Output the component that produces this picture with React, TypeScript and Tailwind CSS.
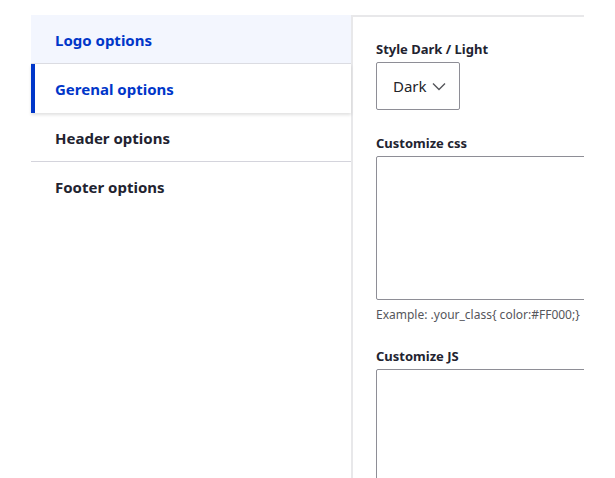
import React from "react";

export default function App() {
  const font = { fontFamily: '"Segoe UI", "Noto Sans", "Open Sans", sans-serif' };
  return (
    <div className="w-[615px] h-[478px] bg-white overflow-hidden" style={font}>
      <div className="flex pl-[31px] pt-[15px] h-full">
        <div className="w-[320px] shrink-0 flex flex-col">
          <div className="h-[49px] bg-[#f3f6fe] border-b border-[#dcdde3] flex items-center pl-[24px] pt-[2px] text-[15px] font-bold text-[#0036c9]">
            Logo options
          </div>
          <div className="relative h-[49px] bg-white flex items-center pl-[24px] pt-[2px] text-[15px] font-bold text-[#0036c9] border-l-4 border-[#0036c9] shadow-[0_2px_3px_rgba(0,0,0,0.12)] z-10">
            <span className="-ml-[4px]">Gerenal options</span>
          </div>
          <div className="h-[49px] bg-white border-b border-[#d4d4dc] flex items-center pl-[24px] pt-[2px] text-[15px] font-bold text-[#222330]">
            Header options
          </div>
          <div className="h-[49px] bg-white flex items-center pl-[24px] pt-[2px] text-[15px] font-bold text-[#222330]">
            Footer options
          </div>
        </div>
        <div className="w-[233px] shrink-0 overflow-hidden border-t-2 border-l-2 border-[#e8e8ea] pl-[23px] pt-[23px]">
          <div className="text-[13px] font-bold text-[#222330] leading-[18px]">Style Dark / Light</div>
          <div className="mt-[4px] w-[84px] h-[48px] border border-[#8e8e96] rounded-[2px] flex items-center pl-[16px] text-[15px] text-[#232429]">
            <span>Dark</span>
            <svg className="ml-[5px] mt-[1px]" width="14" height="9" viewBox="0 0 14 9" fill="none">
              <path d="M1 1.5L7 7.5L13 1.5" stroke="#55565b" strokeWidth="1.4" />
            </svg>
          </div>
          <div className="mt-[24px] text-[13px] font-bold text-[#222330] leading-[18px]">Customize css</div>
          <div className="mt-[4px] w-[260px] h-[144px] border border-[#8e8e96] rounded-[2px]"></div>
          <div className="mt-[7px] text-[12px] text-[#55565b] leading-[16px]">Example: .your_class{"{"} color:#FF000;{"}"}</div>
          <div className="mt-[24px] text-[13px] font-bold text-[#222330] leading-[18px]">Customize JS</div>
          <div className="mt-[4px] w-[260px] h-[144px] border border-[#8e8e96] rounded-[2px]"></div>
        </div>
      </div>
    </div>
  );
}
